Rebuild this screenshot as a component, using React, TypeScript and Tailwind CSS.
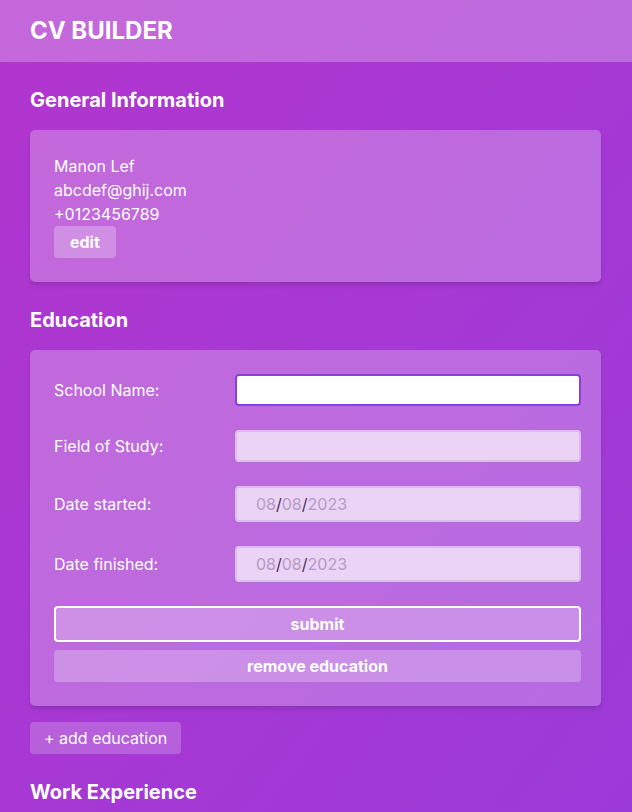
import { useState } from "react";

function Field({ label, type = "text", value, focused }: { label: string; type?: string; value?: string; focused?: boolean }) {
  return (
    <div className="flex items-center">
      <label className="w-[181px] shrink-0 text-[16px] text-white">{label}</label>
      {type === "date" ? (
        <div className="flex h-[36px] flex-1 items-center rounded-[4px] border-2 border-[#dcbcee] bg-[#ebd3f5] pl-[19px] text-[16px] text-[#b39bc6]">
          <span>08</span>
          <span className="text-[#4a2d5c]">/</span>
          <span>08</span>
          <span className="text-[#4a2d5c]">/</span>
          <span>{value}</span>
        </div>
      ) : (
        <input
          className={
            focused
              ? "h-[32px] flex-1 rounded-[4px] border-2 border-[#8a3ee0] bg-white px-2 outline-none"
              : "h-[32px] flex-1 rounded-[4px] border-2 border-[#dcbcee] bg-[#ebd3f5] px-2 outline-none"
          }
        />
      )}
    </div>
  );
}

export default function App() {
  const [info] = useState({ name: "Manon Lef", email: "abcdef@ghij.com", phone: "+0123456789" });

  return (
    <div
      className="min-h-screen bg-gradient-to-br from-[#b235ce] to-[#9c3ad9] text-white"
      style={{ fontFamily: "Inter, 'Noto Sans', sans-serif" }}
    >
      <header className="flex h-[62px] items-center bg-white/25 px-[30px]">
        <h1 className="text-[24px] font-bold leading-none">CV BUILDER</h1>
      </header>

      <main className="px-[30px] pr-[31px]">
        <h2 className="pt-[26px] pb-[18px] text-[20px] font-bold leading-[24px]">General Information</h2>
        <section className="rounded-[5px] bg-white/25 py-6 pl-6 pr-5 shadow-md">
          <p className="text-[16px] leading-[24px]">{info.name}</p>
          <p className="text-[16px] leading-[24px]">{info.email}</p>
          <p className="text-[16px] leading-[24px]">{info.phone}</p>
          <button className="h-[32px] rounded-[4px] bg-white/25 px-4 text-[16px] font-bold">edit</button>
        </section>

        <h2 className="pt-[26px] pb-[18px] text-[20px] font-bold leading-[24px]">Education</h2>
        <section className="flex flex-col rounded-[5px] bg-white/25 pt-6 pb-6 pl-6 pr-5 shadow-md">
          <div className="flex flex-col gap-6">
            <Field label="School Name:" focused />
            <Field label="Field of Study:" />
            <Field label="Date started:" type="date" value="2023" />
            <Field label="Date finished:" type="date" value="2023" />
          </div>
          <button className="mt-6 h-[36px] rounded-[4px] border-2 border-white bg-white/25 text-[16px] font-bold">submit</button>
          <button className="mt-[8px] h-[32px] rounded-[4px] bg-white/25 text-[16px] font-bold">remove education</button>
        </section>

        <button className="mt-4 h-[32px] rounded-[4px] bg-white/20 px-[14px] text-[16px]">+ add education</button>

        <h2 className="pt-[26px] pb-4 text-[20px] font-bold leading-[24px]">Work Experience</h2>
      </main>
    </div>
  );
}
